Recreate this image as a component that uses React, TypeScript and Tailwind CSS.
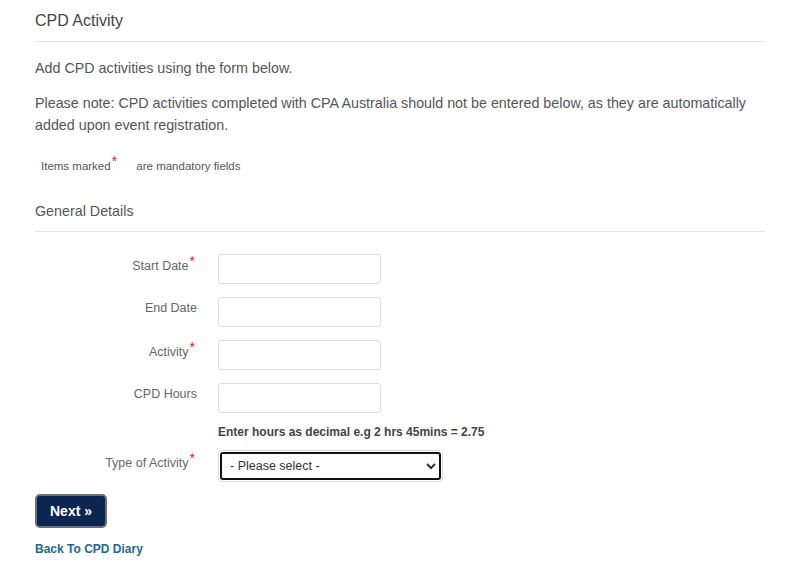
import React from 'react';

const font = { fontFamily: '"Liberation Sans", Arial, sans-serif' };

function Req() {
  return <span className="relative -top-[4px] ml-[1px] mr-[2px] text-[14px] leading-none text-[#d8262b]">*</span>;
}

function Field({ label, required }: { label: string; required?: boolean }) {
  return (
    <div className="flex items-start h-[30px]">
      <div className="w-[183px] pr-[21px] pt-[4px] text-right text-[12.5px] leading-[15px] text-[#666]">
        {label}
        {required && <Req />}
      </div>
      <input className="h-[30px] w-[163px] rounded-[3px] border border-[#ddd] bg-white" />
    </div>
  );
}

export default function App() {
  return (
    <div className="min-h-[569px] bg-white px-[35px] pt-[11px] text-[#555]" style={font}>
      <h1 className="text-[16px] leading-[20px] text-[#444] pb-[10px] border-b border-[#e5e5e5]">CPD Activity</h1>
      <p className="mt-[17px] text-[14.3px] leading-[18px]">Add CPD activities using the form below.</p>
      <p className="mt-[15px] text-[14.3px] leading-[22px]">
        Please note: CPD activities completed with CPA Australia should not be entered below, as they are automatically added upon event registration.
      </p>
      <p className="mt-[22px] ml-[6px] text-[11.5px] text-[#555]">
        Items marked<Req /> <span className="ml-[14px]">are mandatory fields</span>
      </p>
      <h2 className="mt-[27px] text-[14.3px] leading-[18px] text-[#555] pb-[11px] border-b border-[#e5e5e5]">General Details</h2>

      <div className="mt-[22px] flex flex-col gap-[13px]">
        <Field label="Start Date" required />
        <Field label="End Date" />
        <Field label="Activity" required />
        <Field label="CPD Hours" />
      </div>
      <p className="mt-[10px] ml-[183px] text-[12px] font-bold text-[#444]">Enter hours as decimal e.g 2 hrs 45mins = 2.75</p>

      <div className="mt-[9px] flex items-start">
        <div className="w-[183px] pr-[21px] pt-[5px] text-right text-[12.5px] leading-[15px] text-[#666]">
          Type of Activity<Req />
        </div>
        <div className="rounded-[4px] border border-[#ddd] p-[1px]">
          <select className="h-[28px] w-[221px] rounded-[3px] border-2 border-[#111] bg-white pl-[4px] text-[12.5px] text-[#333]" style={font}>
            <option>- Please select -</option>
          </select>
        </div>
      </div>

      <button className="mt-[12px] h-[34px] w-[72px] rounded-[5px] border-2 border-[#6b6f77] bg-[#0b2650] text-[14px] font-bold text-white">
        Next »
      </button>
      <div className="mt-[8px]">
        <a href="#" className="text-[12px] font-bold text-[#1d6a8c]">Back To CPD Diary</a>
      </div>
    </div>
  );
}
